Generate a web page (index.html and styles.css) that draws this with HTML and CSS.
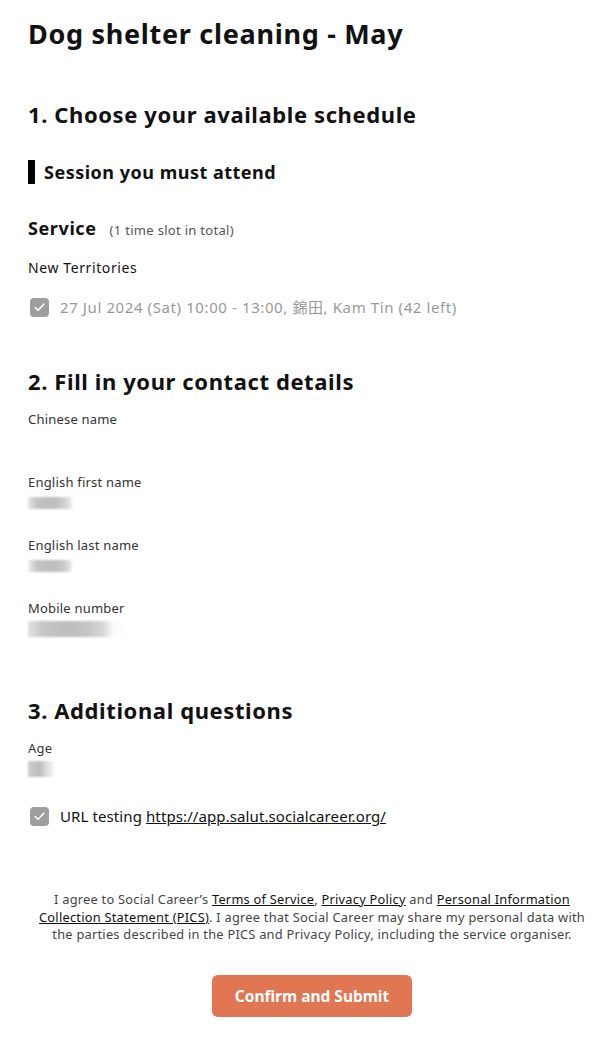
FILE: index.html
```html
<!DOCTYPE html>
<html lang="en">
<head>
    <meta charset="UTF-8">
    <meta name="viewport" content="width=device-width, initial-scale=1.0">
    <title>Dog shelter cleaning - May</title>
    <link rel="stylesheet" href="styles.css">
</head>
<body>
    <h1 class="title">Dog shelter cleaning - May</h1>

    <!-- Paso 1 -->
    <h2 class="step step-first">1. Choose your available schedule</h2>
    <h3 class="block-title">Session you must attend</h3>

    <div class="service">
        <span class="service-name">Service</span>
        <span class="service-count">(1 time slot in total)</span>
    </div>
    <div class="region">New Territories</div>
    <label class="check disabled">
        <span class="box"><svg viewBox="0 0 20 20" width="20" height="20"><path d="M5.5 10.5l3 3 6-6.5" fill="none" stroke="#fff" stroke-width="1.6" stroke-linecap="round" stroke-linejoin="round"/></svg></span>
        <span>27 Jul 2024 (Sat) 10:00 - 13:00, 錦田, Kam Tin (42 left)</span>
    </label>

    <!-- Paso 2 -->
    <h2 class="step">2. Fill in your contact details</h2>
    <div class="field">
        <div class="label">Chinese name</div>
        <div class="value"></div>
    </div>
    <div class="field">
        <div class="label">English first name</div>
        <div class="value"><span class="pix pix-a"></span></div>
    </div>
    <div class="field">
        <div class="label">English last name</div>
        <div class="value"><span class="pix pix-b"></span></div>
    </div>
    <div class="field">
        <div class="label">Mobile number</div>
        <div class="value"><span class="pix pix-c"></span></div>
    </div>

    <!-- Paso 3 -->
    <h2 class="step step-last">3. Additional questions</h2>
    <div class="field">
        <div class="label">Age</div>
        <div class="value"><span class="pix pix-d"></span></div>
    </div>
    <label class="check check-url">
        <span class="box"><svg viewBox="0 0 20 20" width="20" height="20"><path d="M5.5 10.5l3 3 6-6.5" fill="none" stroke="#fff" stroke-width="1.6" stroke-linecap="round" stroke-linejoin="round"/></svg></span>
        <span>URL testing <a href="#">https://app.salut.socialcareer.org/</a></span>
    </label>

    <p class="agree">
        I agree to Social Career’s <a href="#">Terms of Service</a>, <a href="#">Privacy Policy</a> and <a href="#">Personal Information Collection Statement (PICS)</a>. I agree that Social Career may share my personal data with the parties described in the PICS and Privacy Policy, including the service organiser.
    </p>

    <div class="actions">
        <button class="submit">Confirm and Submit</button>
    </div>
</body>
</html>
```

FILE: styles.css
```css
/* Estilos globales */
body {
    font-family: "Noto Sans", "Noto Sans CJK TC", sans-serif;
    color: #111;
    background-color: #fff;
    margin: 0;
    padding: 0 12px 0 28px;
}

.title {
    font-size: 27px;
    line-height: 36px;
    font-weight: 700;
    letter-spacing: 0.7px;
    margin: 16px 0 0;
}

.step {
    font-size: 22px;
    line-height: 30px;
    font-weight: 700;
    letter-spacing: 0.6px;
    margin: 49px 0 0;
}

.step-first {
    margin-top: 47px;
}

.step-last {
    margin-top: 54px;
}

/* Sesiones */
.block-title {
    font-size: 18px;
    line-height: 24px;
    font-weight: 700;
    letter-spacing: 0.5px;
    margin: 31px 0 0;
    border-left: 7px solid #000;
    padding-left: 9px;
}

.service {
    margin-top: 32px;
    height: 24px;
    display: flex;
    align-items: baseline;
    gap: 13px;
}

.service-name {
    font-size: 18px;
    line-height: 24px;
    font-weight: 700;
    letter-spacing: 0.6px;
}

.service-count {
    font-size: 13px;
    letter-spacing: 0.3px;
    color: #555;
}

.region {
    font-size: 14px;
    line-height: 20px;
    letter-spacing: 0.6px;
    margin-top: 18px;
}

.check {
    display: flex;
    align-items: center;
    gap: 11px;
    font-size: 15px;
    line-height: 20px;
    margin-top: 19px;
    padding-left: 2px;
}

.check.disabled {
    color: #999;
    letter-spacing: 0.6px;
}

.check-url {
    margin-top: 25px;
    letter-spacing: 0.1px;
}

.check .box {
    width: 19px;
    height: 19px;
    border-radius: 4px;
    background-color: #9e9e9e;
    display: flex;
    align-items: center;
    justify-content: center;
    flex-shrink: 0;
}

.check a {
    color: #111;
}

/* Campos */
.field {
    margin-top: 21px;
}

.step + .field {
    margin-top: 14px;
}

.label {
    font-size: 13px;
    line-height: 18px;
    letter-spacing: 0.2px;
    color: #333;
}

.value {
    height: 24px;
    display: flex;
    align-items: center;
}

.pix {
    display: block;
    height: 12px;
    filter: blur(1px);
}

.pix-a {
    width: 44px;
    background: linear-gradient(90deg, #e6e6e6, #c4c4c4 20%, #bcbcbc 60%, #d4d4d4 85%, #eee);
}

.pix-b {
    width: 44px;
    background: linear-gradient(90deg, #eee, #c4c4c4 20%, #bcbcbc 60%, #cfcfcf 85%, #eee);
}

.pix-c {
    width: 100px;
    height: 16px;
    background: linear-gradient(90deg, #e0e0e0, #c6c6c6 15%, #bdbdbd 40%, #c6c6c6 60%, #d6d6d6 75%, #fafafa 85%, #fff);
}

.pix-d {
    width: 26px;
    height: 16px;
    background: linear-gradient(90deg, #cdcdcd, #bdbdbd 45%, #e2e2e2 75%, #f6f6f6);
}

/* Aceptación */
.agree {
    margin: 65px 0 0;
    font-size: 12.8px;
    line-height: 17.5px;
    letter-spacing: 0.25px;
    color: #444;
    text-align: center;
}

.agree a {
    color: #111;
}

.actions {
    margin-top: 31px;
    text-align: center;
}

.submit {
    font-family: inherit;
    font-size: 15.5px;
    font-weight: 700;
    color: #fff;
    background-color: #e07652;
    border: none;
    border-radius: 6px;
    width: 200px;
    height: 42px;
    cursor: pointer;
}
```
